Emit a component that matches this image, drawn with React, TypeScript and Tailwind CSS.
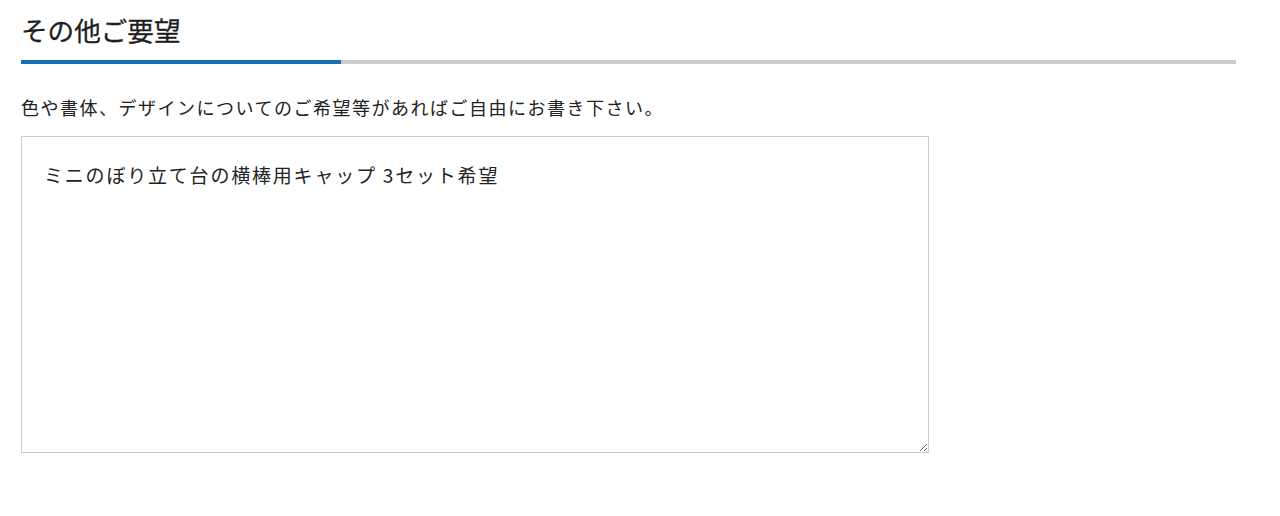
export default function App() {
  return (
    <div
      className="w-[1280px] h-[516px] bg-white text-[#222]"
      style={{ fontFamily: '"Noto Sans CJK JP", "Noto Sans", sans-serif' }}
    >
      <div className="pl-[21px] pr-[44px] pt-[10px]">
        <h2 className="text-[26.6px] leading-[40px] font-normal text-[#1e1e1e] [-webkit-text-stroke:0.3px_#1e1e1e]">
          その他ご要望
        </h2>
        <div className="mt-[10px] flex h-[4px] w-[1215px] bg-[#cccccc]">
          <div className="h-full w-[320px] bg-[#1a6eb6]" />
        </div>
        <p className="mt-[29px] text-[18px] leading-[29px] tracking-[1.5px] text-[#222]">
          色や書体、デザインについてのご希望等があればご自由にお書き下さい。
        </p>
        <textarea
          className="mt-[14px] block h-[317px] w-[908px] border border-[#cccccc] px-[22px] py-[23px] text-[19px] leading-[30px] tracking-[1.8px] text-[#222] outline-none"
          defaultValue="ミニのぼり立て台の横棒用キャップ 3セット希望"
        />
      </div>
    </div>
  );
}
